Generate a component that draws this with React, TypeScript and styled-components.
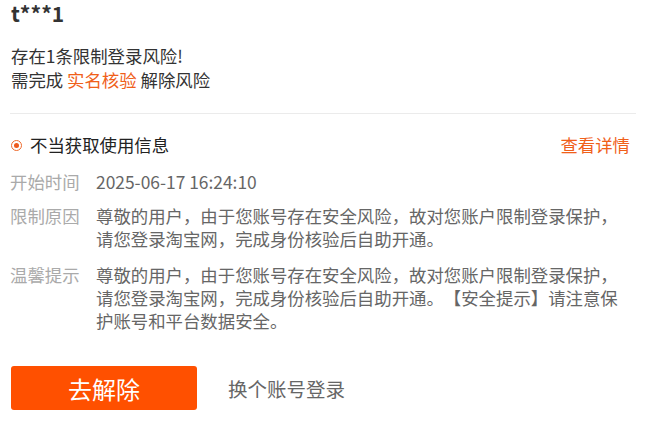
import React from "react";
import styled, { createGlobalStyle } from "styled-components";

const GlobalStyle = createGlobalStyle`
  body {
    margin: 0;
    background: #fff;
    font-family: "Noto Sans CJK SC", "Noto Sans", sans-serif;
    text-spacing-trim: space-all;
  }
`;

const Page = styled.div`
  width: 646px;
  padding: 0 10px 0 10px;
  box-sizing: border-box;
  display: flex;
  flex-direction: column;
`;

const Title = styled.div`
  font-size: 21px;
  font-weight: 700;
  line-height: 27px;
  color: #333;
  padding-left: 1px;
`;

const Intro = styled.div`
  margin-top: 17px;
  font-size: 17.4px;
  line-height: 24px;
  color: #333;
  padding-left: 1px;
`;

const Accent = styled.span`
  color: #f0601a;
`;

const Divider = styled.div`
  margin-top: 21px;
  height: 1px;
  background: #ebebeb;
`;

const Details = styled.div`
  padding-right: 6px;
  display: flex;
  flex-direction: column;
`;

const RiskRow = styled.div`
  margin-top: 18px;
  display: flex;
  align-items: center;
  justify-content: space-between;
  font-size: 17.4px;
  line-height: 26px;
`;

const RiskName = styled.div`
  display: flex;
  align-items: center;
  gap: 8px;
  color: #222;
`;

const Dot = styled.span`
  width: 9px;
  height: 9px;
  border: 1.5px solid #ee6a2c;
  border-radius: 50%;
  display: flex;
  align-items: center;
  justify-content: center;
  margin-left: 1px;
  &::after {
    content: "";
    width: 5px;
    height: 5px;
    border-radius: 50%;
    background: #ee5a1c;
  }
`;

const DetailLink = styled.a`
  color: #f0601a;
  text-decoration: none;
`;

const InfoRow = styled.div<{ $gap: number }>`
  margin-top: ${(p) => p.$gap}px;
  display: grid;
  grid-template-columns: 86px 1fr;
  font-size: 17.4px;
  line-height: 23px;
`;

const Label = styled.div`
  color: #aaa;
`;

const Value = styled.div`
  color: #666;
`;

const Actions = styled.div`
  margin-top: 34px;
  display: flex;
  align-items: center;
  gap: 31px;
`;

const PrimaryButton = styled.button`
  width: 186px;
  height: 44px;
  margin-left: 1px;
  border: none;
  border-radius: 3px;
  background: #ff5000;
  color: #fff;
  font-family: inherit;
  font-size: 24px;
  cursor: pointer;
`;

const SwitchLink = styled.a`
  color: #666;
  font-size: 19.5px;
  text-decoration: none;
`;

const notice =
  "尊敬的用户，由于您账号存在安全风险，故对您账户限制登录保护，请您登录淘宝网，完成身份核验后自助开通。";

export default function App() {
  return (
    <Page>
      <GlobalStyle />
      <Title>t***1</Title>
      <Intro>
        <div>存在1条限制登录风险!</div>
        <div>
          需完成 <Accent>实名核验</Accent> 解除风险
        </div>
      </Intro>
      <Divider />
      <Details>
        <RiskRow>
          <RiskName>
            <Dot />
            不当获取使用信息
          </RiskName>
          <DetailLink href="#">查看详情</DetailLink>
        </RiskRow>
        <InfoRow $gap={12}>
          <Label>开始时间</Label>
          <Value>2025-06-17 16:24:10</Value>
        </InfoRow>
        <InfoRow $gap={11}>
          <Label>限制原因</Label>
          <Value>{notice}</Value>
        </InfoRow>
        <InfoRow $gap={13}>
          <Label>温馨提示</Label>
          <Value>{notice}【安全提示】请注意保护账号和平台数据安全。</Value>
        </InfoRow>
      </Details>
      <Actions>
        <PrimaryButton>去解除</PrimaryButton>
        <SwitchLink href="#">换个账号登录</SwitchLink>
      </Actions>
    </Page>
  );
}
